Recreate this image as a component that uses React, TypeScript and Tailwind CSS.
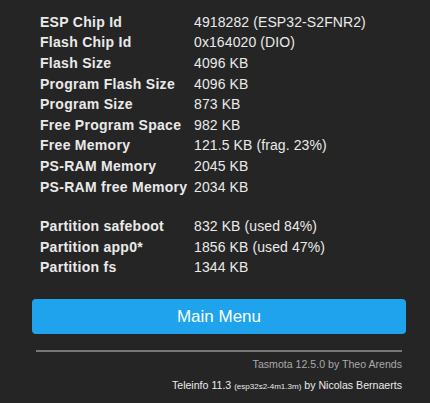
import React from 'react';

const rows: [string, string][] = [
  ['ESP Chip Id', '4918282 (ESP32-S2FNR2)'],
  ['Flash Chip Id', '0x164020 (DIO)'],
  ['Flash Size', '4096 KB'],
  ['Program Flash Size', '4096 KB'],
  ['Program Size', '873 KB'],
  ['Free Program Space', '982 KB'],
  ['Free Memory', '121.5 KB (frag. 23%)'],
  ['PS-RAM Memory', '2045 KB'],
  ['PS-RAM free Memory', '2034 KB'],
];

const partitions: [string, string][] = [
  ['Partition safeboot', '832 KB (used 84%)'],
  ['Partition app0*', '1856 KB (used 47%)'],
  ['Partition fs', '1344 KB'],
];

const Row = ({ label, value }: { label: string; value: string }) => (
  <div className="flex h-[20.6px] items-center">
    <div className="w-[154px] shrink-0 font-bold tracking-[0.28px]">{label}</div>
    <div className="tracking-[0.1px]">{value}</div>
  </div>
);

export default function App() {
  return (
    <div className="min-h-[403px] w-full bg-[#252525] text-[#eaeaea] font-['Liberation_Sans',Arial,sans-serif]">
      <div className="w-[374px] ml-[32px] pt-[12px]">
        <div className="pl-[8px] text-[14px]">
          {rows.map(([l, v]) => (
            <Row key={l} label={l} value={v} />
          ))}
          <div className="h-[19px]" />
          {partitions.map(([l, v]) => (
            <Row key={l} label={l} value={v} />
          ))}
        </div>

        <button className="mt-[21px] h-[35px] w-full rounded-[4px] bg-[#1fa3ec] text-[17px] text-[#faffff]">
          Main Menu
        </button>

        <div className="mx-auto mt-[16px] w-[366px]">
          <div className="h-[2px] bg-[#777]" />
          <div className="text-right text-[10.6px] leading-[13px]">
            <div className="mt-[6px] text-[#aaa]">Tasmota 12.5.0 by Theo Arends</div>
            <div className="mt-[8px] text-[#eaeaea]">
              Teleinfo 11.3 <span className="text-[8px]">(esp32s2-4m1.3m)</span> by Nicolas Bernaerts
            </div>
          </div>
        </div>
      </div>
    </div>
  );
}
